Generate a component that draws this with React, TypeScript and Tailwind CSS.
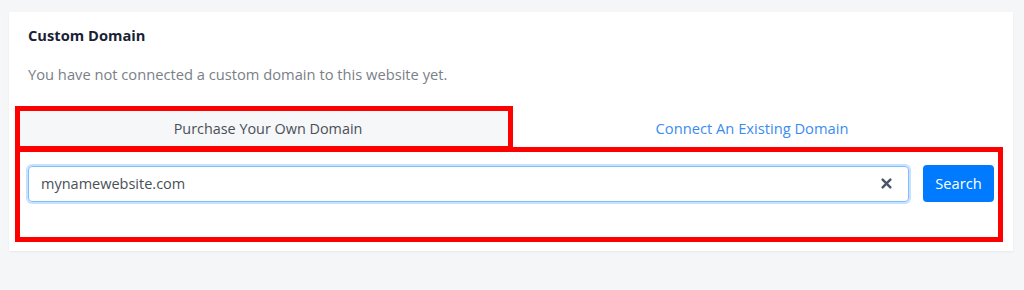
import React from "react";

export default function App() {
  return (
    <div
      className="w-[1024px] h-[290px] bg-[#f5f6f8] pt-[12px] pl-[9px] pr-[11px]"
      style={{ fontFamily: '"Open Sans", "Noto Sans", sans-serif' }}
    >
      <div className="relative bg-white h-[239px] shadow-[0_1px_2px_rgba(0,0,0,0.06)] pt-[13px] px-[19px]">
        <h3 className="text-[14.7px] leading-[20px] font-bold text-[#1a1f36]">Custom Domain</h3>
        <p className="mt-[19px] text-[14.7px] leading-[20px] text-[#7a8088]">
          You have not connected a custom domain to this website yet.
        </p>
        <div className="mt-[26px] ml-[-8px] flex h-[37px]">
          <button className="flex-1 pl-[6px] bg-[#f6f7f9] text-[14.4px] text-[#4a4f57] flex items-center justify-center">
            Purchase Your Own Domain
          </button>
          <button className="flex-1 text-[14.7px] text-[#3b8cf0] flex items-center justify-center">
            Connect An Existing Domain
          </button>
        </div>
        <div className="mt-[18px] flex items-center gap-[14px]">
          <div className="flex-1 h-[36px] rounded-[4px] border border-[#80bdff] shadow-[0_0_0_2px_rgba(0,123,255,0.22)] flex items-center pl-[12px] pr-[16px]">
            <span className="flex-1 text-[14.5px] text-[#495057]">mynamewebsite.com</span>
            <svg width="11" height="11" viewBox="0 0 10 10" className="text-[#4a5568]">
              <path d="M1.5 1.5 L8.5 8.5 M8.5 1.5 L1.5 8.5" stroke="currentColor" strokeWidth="2.2" strokeLinecap="round" />
            </svg>
          </div>
          <button className="w-[71px] h-[37px] rounded-[4px] bg-[#007bff] text-white text-[14.7px]">Search</button>
        </div>
        <div className="absolute left-[6px] top-[94px] w-[498px] h-[45px] border-[5px] border-[#ff0000]" />
        <div className="absolute left-[6px] top-[135px] w-[988px] h-[95px] border-[5px] border-[#ff0000]" />
      </div>
    </div>
  );
}
